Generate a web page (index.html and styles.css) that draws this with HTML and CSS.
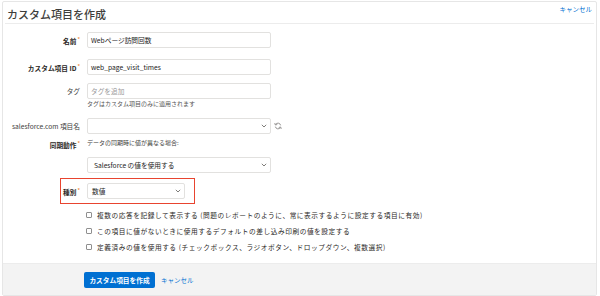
FILE: index.html
```html
<!DOCTYPE html>
<html lang="ja">
<head>
    <meta charset="UTF-8">
    <meta name="viewport" content="width=device-width, initial-scale=1.0">
    <title>カスタム項目を作成</title>
    <link rel="stylesheet" href="styles.css">
</head>
<body>
    <div class="card">
        <div class="head">
            <h1>カスタム項目を作成</h1>
            <a class="link top-cancel" href="#">キャンセル</a>
        </div>

        <div class="form">
            <div class="row">
                <label class="label strong">名前<span class="req">*</span></label>
                <div class="input">Webページ訪問回数</div>
            </div>

            <div class="row gap-11">
                <label class="label strong">カスタム項目 ID<span class="req">*</span></label>
                <div class="input">web_page_visit_times</div>
            </div>

            <div class="row gap-8">
                <label class="label">タグ</label>
                <div class="input placeholder">タグを追加</div>
            </div>
            <div class="row help-row">
                <span></span>
                <p class="help">タグはカスタム項目のみに適用されます</p>
            </div>

            <div class="row gap-10">
                <label class="label">salesforce.com 項目名</label>
                <div class="input select">
                    <span></span>
                    <svg class="chev" viewBox="0 0 6 4" width="6" height="4"><path d="M0.8 0.8 L3 3 L5.2 0.8" fill="none" stroke="#706e6b" stroke-width="0.9"/></svg>
                </div>
                <svg class="refresh" viewBox="0 0 10 10" width="8" height="8">
                    <path d="M8.3 4.2 A3.4 3.4 0 0 0 2.1 3" fill="none" stroke="#8a8886" stroke-width="1.1"/>
                    <path d="M1.7 5.8 A3.4 3.4 0 0 0 7.9 7" fill="none" stroke="#8a8886" stroke-width="1.1"/>
                    <path d="M1 1.3 L1.6 3.7 L4 3.2" fill="none" stroke="#8a8886" stroke-width="1.1"/>
                    <path d="M9 8.7 L8.4 6.3 L6 6.8" fill="none" stroke="#8a8886" stroke-width="1.1"/>
                </svg>
            </div>

            <div class="row text-row gap-5">
                <label class="label strong">同期動作<span class="req">*</span></label>
                <p class="note">データの同期時に値が異なる場合:</p>
            </div>

            <div class="row gap-8">
                <span></span>
                <div class="input select">
                    <span>Salesforce の値を使用する</span>
                    <svg class="chev" viewBox="0 0 6 4" width="6" height="4"><path d="M0.8 0.8 L3 3 L5.2 0.8" fill="none" stroke="#706e6b" stroke-width="0.9"/></svg>
                </div>
            </div>

            <div class="row highlight">
                <label class="label strong">種別<span class="req">*</span></label>
                <div class="input select">
                    <span>数値</span>
                    <svg class="chev" viewBox="0 0 6 4" width="6" height="4"><path d="M0.8 0.8 L3 3 L5.2 0.8" fill="none" stroke="#706e6b" stroke-width="0.9"/></svg>
                </div>
            </div>

            <div class="checks">
                <label class="check"><span class="box"></span>複数の応答を記録して表示する (問題のレポートのように、常に表示するように設定する項目に有効)</label>
                <label class="check"><span class="box"></span>この項目に値がないときに使用するデフォルトの差し込み印刷の値を設定する</label>
                <label class="check"><span class="box"></span>定義済みの値を使用する (チェックボックス、ラジオボタン、ドロップダウン、複数選択)</label>
            </div>
        </div>

        <div class="foot">
            <button class="btn">カスタム項目を作成</button>
            <a class="link" href="#">キャンセル</a>
        </div>
    </div>
</body>
</html>
```

FILE: styles.css
```css
* {
    margin: 0;
    padding: 0;
    box-sizing: border-box;
}

html, body {
    width: 100%;
    height: 100%;
    background-color: #ffffff;
    font-family: "Noto Sans CJK JP", "Noto Sans", sans-serif;
    font-size: 6.7px;
    color: #3e3e3c;
    overflow: hidden;
}

.card {
    margin: 1px 3px 0 2px;
    border: 1px solid #e6e6e6;
    border-radius: 2px;
}

.head {
    display: flex;
    justify-content: space-between;
    align-items: flex-start;
    margin: 0 2px;
    padding: 3px 2px 0 2px;
    height: 22px;
    border-bottom: 1px solid #ececec;
}

h1 {
    font-size: 11px;
    font-weight: 500;
    line-height: 18px;
    color: #3e3e3c;
}

.link {
    color: #0070d2;
    text-decoration: none;
    font-size: 6.5px;
    line-height: 8px;
}

.form {
    padding: 8px 0 12px 0;
}

.row {
    display: grid;
    grid-template-columns: 77px 185px auto;
    column-gap: 6px;
    align-items: center;
}

.gap-5 { margin-top: 5px; }
.gap-8 { margin-top: 8px; }
.gap-10 { margin-top: 10px; }
.gap-11 { margin-top: 11px; }

.label {
    justify-self: end;
    white-space: nowrap;
    line-height: 8px;
    color: #3e3e3c;
}

.label.strong {
    font-weight: bold;
    color: #2b2826;
}

.req {
    color: #f08a3c;
    font-size: 5px;
    vertical-align: 3px;
    margin-left: 1px;
}

.input {
    height: 16px;
    border: 1px solid #e2e1df;
    border-radius: 2px;
    padding: 0 3px;
    line-height: 14px;
    color: #1b1b1b;
    background: #ffffff;
    white-space: nowrap;
    margin-left: 1px;
}

.placeholder {
    color: #9a9a9a;
}

.help-row {
    margin-top: 1px;
}

.help {
    font-size: 6px;
    line-height: 8px;
    color: #555555;
    margin-left: 1px;
}

.select {
    display: flex;
    justify-content: space-between;
    align-items: center;
    padding: 0 3px 0 6px;
}

.chev {
    display: block;
}

.refresh {
    display: block;
    margin-left: -3px;
}

.text-row .note {
    font-size: 6px;
    line-height: 8px;
    margin-left: 1px;
    margin-top: -2px;
    color: #3e3e3c;
}

.highlight {
    margin-top: 5px;
    margin-left: 57px;
    width: 135px;
    grid-template-columns: 19px 99px;
    padding: 4px 0;
    border: 1.2px solid #e8442f;
}

.highlight .input {
    padding-left: 4px;
}

.checks {
    display: flex;
    flex-direction: column;
    gap: 8px;
    margin-top: 7px;
    padding-left: 83px;
}

.check {
    display: flex;
    align-items: center;
    line-height: 8px;
    white-space: nowrap;
    letter-spacing: 0.55px;
    color: #2b2826;
}

.box {
    width: 6px;
    height: 6px;
    border: 0.8px solid #8f8f8f;
    border-radius: 1px;
    margin-right: 5px;
    background: #ffffff;
}

.foot {
    display: flex;
    align-items: center;
    gap: 6px;
    padding: 8px 0 7px 81px;
    background-color: #f3f3f3;
    border-top: 1px solid #ececec;
}

.btn {
    height: 16px;
    width: 71px;
    border: none;
    border-radius: 2px;
    background-color: #0070d2;
    color: #ffffff;
    font-family: "Noto Sans CJK JP", sans-serif;
    font-size: 6.7px;
    font-weight: bold;
}
```
